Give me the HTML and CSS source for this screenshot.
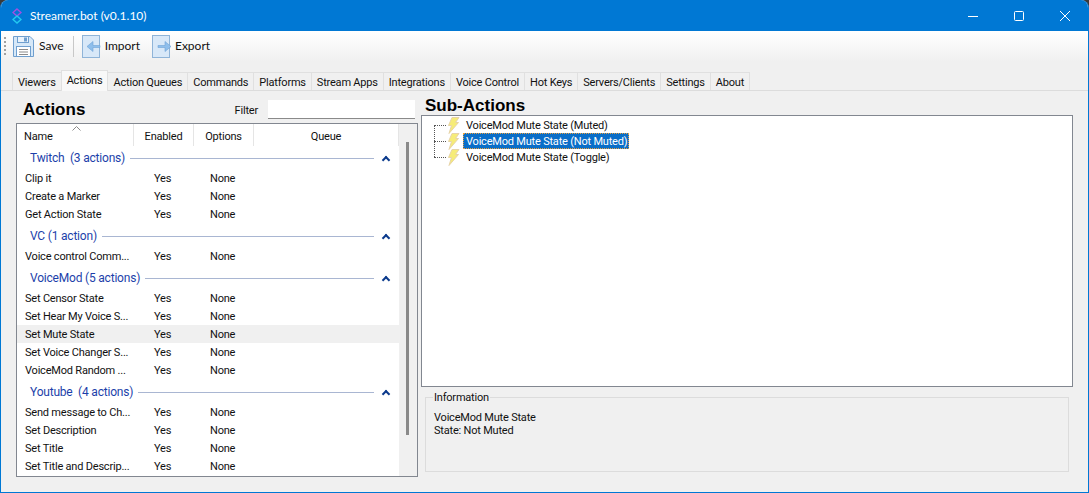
FILE: index.html
```html
<!DOCTYPE html>
<html>
<head>
<meta charset="utf-8">
<title>Streamer.bot</title>
<link rel="stylesheet" href="styles.css">
</head>
<body>
<div class="window">

  <!-- Title bar -->
  <div class="titlebar">
    <svg class="app-logo" width="10" height="16" viewBox="0 0 10 16" fill="none" stroke-width="1.5">
      <path d="M5 1 L9 4.5 L5 8 L1 4.5 Z" stroke="#a04fe0"/>
      <path d="M5 8 L9 11.5 L5 15 L1 11.5 Z" stroke="#22c8f0"/>
    </svg>
    <span class="title-text">Streamer.bot (v0.1.10)</span>
    <div class="win-buttons">
      <svg width="12" height="12" viewBox="0 0 12 12"><path d="M1 6.5 H11" stroke="#fff"/></svg>
      <svg width="12" height="12" viewBox="0 0 12 12"><rect x="1.5" y="1.5" width="9" height="9" rx="1" fill="none" stroke="#fff"/></svg>
      <svg width="12" height="12" viewBox="0 0 12 12"><path d="M1 1 L11 11 M11 1 L1 11" stroke="#fff"/></svg>
    </div>
  </div>

  <!-- Toolbar -->
  <div class="toolbar">
    <div class="gripper"></div>
    <div class="tool tool-save">
      <svg width="23" height="23" viewBox="0 0 23 23">
        <path d="M1.5 1.5 H18 L21.5 5 V21.5 H1.5 Z" fill="#d6e8f8" stroke="#6f9fcf"/>
        <rect x="5.5" y="1.5" width="11" height="6" fill="#eaf3fb" stroke="#6f9fcf"/>
        <rect x="12" y="2.5" width="3" height="4" fill="#6f9fcf"/>
        <rect x="4.5" y="11.5" width="14" height="10" fill="#fff" stroke="#6f9fcf"/>
        <path d="M7 14.5 H16 M7 17 H16 M7 19.5 H16" stroke="#8c8c8c"/>
      </svg>
      <span>Save</span>
    </div>
    <div class="tool-sep"></div>
    <div class="tool tool-import">
      <svg width="19" height="23" viewBox="0 0 19 23">
        <rect x="0.5" y="0.5" width="17" height="22" fill="#d8e8f8" stroke="#8fb4d8"/>
        <path d="M5 11.5 L11 6.5 V10.5 H18 V12.5 H11 V16.5 Z" fill="#8fbfec" stroke="#6fa3d6" stroke-width="0.6"/>
      </svg>
      <span>Import</span>
    </div>
    <div class="tool tool-export">
      <svg width="19" height="23" viewBox="0 0 19 23">
        <rect x="0.5" y="0.5" width="17" height="22" fill="#d8e8f8" stroke="#8fb4d8"/>
        <path d="M19 11.5 L13 6.5 V10.5 H6 V12.5 H13 V16.5 Z" fill="#8fbfec" stroke="#6fa3d6" stroke-width="0.6"/>
      </svg>
      <span>Export</span>
    </div>
  </div>

  <!-- Tabs -->
  <div class="tabs">
    <div class="tab">Viewers</div>
    <div class="tab tab-active">Actions</div>
    <div class="tab">Action Queues</div>
    <div class="tab">Commands</div>
    <div class="tab">Platforms</div>
    <div class="tab">Stream Apps</div>
    <div class="tab">Integrations</div>
    <div class="tab">Voice Control</div>
    <div class="tab">Hot Keys</div>
    <div class="tab">Servers/Clients</div>
    <div class="tab">Settings</div>
    <div class="tab">About</div>
  </div>

  <div class="tab-page">

    <!-- Actions column -->
    <div class="actions-pane">
      <div class="actions-head">
        <h1 class="pane-title">Actions</h1>
        <label class="filter-label">Filter</label>
        <div class="filter-input"></div>
      </div>
      <div class="listbox">
        <div class="list-main">
          <div class="list-header">
            <div class="col-name">Name</div>
            <div class="col-enabled">Enabled</div>
            <div class="col-options">Options</div>
            <div class="col-queue">Queue</div>
            <svg class="sort-caret" width="9" height="5" viewBox="0 0 9 5"><path d="M0.5 4.5 L4.5 0.5 L8.5 4.5" fill="none" stroke="#8a8a8a"/></svg>
          </div>

          <div class="group group-first"><span>Twitch&nbsp; (3 actions)</span><i></i><b class="chev"></b></div>
          <div class="row"><span>Clip it</span><span>Yes</span><span>None</span></div>
          <div class="row"><span>Create a Marker</span><span>Yes</span><span>None</span></div>
          <div class="row"><span>Get Action State</span><span>Yes</span><span>None</span></div>

          <div class="group"><span>VC (1 action)</span><i></i><b class="chev"></b></div>
          <div class="row"><span>Voice control Comm...</span><span>Yes</span><span>None</span></div>

          <div class="group"><span>VoiceMod (5 actions)</span><i></i><b class="chev"></b></div>
          <div class="row"><span>Set Censor State</span><span>Yes</span><span>None</span></div>
          <div class="row"><span>Set Hear My Voice S...</span><span>Yes</span><span>None</span></div>
          <div class="row row-current"><span>Set Mute State</span><span>Yes</span><span>None</span></div>
          <div class="row"><span>Set Voice Changer S...</span><span>Yes</span><span>None</span></div>
          <div class="row"><span>VoiceMod Random ...</span><span>Yes</span><span>None</span></div>

          <div class="group"><span>Youtube&nbsp; (4 actions)</span><i></i><b class="chev"></b></div>
          <div class="row"><span>Send message to Ch...</span><span>Yes</span><span>None</span></div>
          <div class="row"><span>Set Description</span><span>Yes</span><span>None</span></div>
          <div class="row"><span>Set Title</span><span>Yes</span><span>None</span></div>
          <div class="row"><span>Set Title and Descrip...</span><span>Yes</span><span>None</span></div>
        </div>
        <div class="scrollbar"><div class="thumb"></div></div>
      </div>
    </div>

    <!-- Sub-actions column -->
    <div class="sub-pane">
      <h2 class="pane-title sub-title">Sub-Actions</h2>
      <div class="treebox">
        <div class="tree-row">
          <svg class="bolt" width="13" height="17" viewBox="0 0 13 17"><path d="M5 0.5 H12 L8.5 5.5 H11.5 L2 16.5 L4.5 8.5 H1.5 Z" fill="#f6ec78" stroke="#e6d3a8"/></svg>
          <span class="tree-text">VoiceMod Mute State (Muted)</span>
        </div>
        <div class="tree-row">
          <svg class="bolt" width="13" height="17" viewBox="0 0 13 17"><path d="M5 0.5 H12 L8.5 5.5 H11.5 L2 16.5 L4.5 8.5 H1.5 Z" fill="#f6ec78" stroke="#e6d3a8"/></svg>
          <span class="tree-text tree-selected">VoiceMod Mute State (Not Muted)</span>
        </div>
        <div class="tree-row">
          <svg class="bolt" width="13" height="17" viewBox="0 0 13 17"><path d="M5 0.5 H12 L8.5 5.5 H11.5 L2 16.5 L4.5 8.5 H1.5 Z" fill="#f6ec78" stroke="#e6d3a8"/></svg>
          <span class="tree-text">VoiceMod Mute State (Toggle)</span>
        </div>
      </div>
      <fieldset class="info">
        <legend>Information</legend>
        <div>VoiceMod Mute State</div>
        <div>State: Not Muted</div>
      </fieldset>
    </div>

  </div>
</div>
</body>
</html>
```

FILE: styles.css
```css
* {
  box-sizing: border-box;
}

html, body {
  margin: 0;
  height: 100%;
  background-color: #3a3a3a;
}

body {
  overflow: hidden;
  font-family: Roboto, Arial, sans-serif;
  font-size: 11px;
  letter-spacing: -0.2px;
  color: #111;
}

.window {
  display: flex;
  flex-direction: column;
  height: 493px;
  background-color: #f0f0f0;
  border: 1px solid #0078d4;
  border-top: none;
  border-radius: 8px 8px 0 0;
  overflow: hidden;
}

/* Title bar */
.titlebar {
  display: flex;
  align-items: center;
  height: 31px;
  flex: none;
  background-color: #0078d4;
  color: #fff;
  padding-left: 11px;
}

.app-logo {
  margin-right: 8px;
}

.title-text {
  font-family: Lato, Arial, sans-serif;
  font-size: 12px;
  letter-spacing: 0;
}

.win-buttons {
  margin-left: auto;
  display: flex;
  gap: 34px;
  padding-right: 17px;
}

/* Toolbar */
.toolbar {
  display: flex;
  align-items: center;
  height: 30px;
  flex: none;
  background: linear-gradient(#ffffff, #f0f0f0);
  padding-left: 3px;
}

.gripper {
  width: 2px;
  height: 18px;
  margin-right: 6px;
  border-left: 2px dotted #a0a0a0;
}

.tool {
  display: flex;
  align-items: center;
  gap: 4px;
  font-family: Lato, Arial, sans-serif;
  font-size: 12px;
  letter-spacing: 0;
}

.tool span {
  padding-bottom: 2px;
}

.tool-sep {
  width: 1px;
  height: 21px;
  background-color: #c8c8c8;
  margin: 0 8px 0 9px;
}

.tool-export {
  margin-left: 12px;
}

/* Tabs */
.tabs {
  display: flex;
  align-items: flex-end;
  height: 30px;
  flex: none;
  padding-left: 11px;
  border-bottom: 1px solid #dcdcdc;
}

.tab {
  height: 18px;
  line-height: 19px;
  padding: 0 5px;
  background-color: #f0f0f0;
  border: 1px solid #e0e0e0;
  border-bottom: none;
  margin-right: -1px;
  white-space: nowrap;
}

.tab-active {
  height: 21px;
  line-height: 19px;
  background-color: #f8f8f8;
  position: relative;
  margin-bottom: -1px;
  z-index: 1;
}

/* Page under the tabs */
.tab-page {
  flex: 1;
  display: flex;
  gap: 3px;
  padding: 0 15px 15px 15px;
  min-height: 0;
}

.actions-pane {
  width: 402px;
  flex: none;
  display: flex;
  flex-direction: column;
}

.actions-head {
  display: flex;
  align-items: center;
  height: 32px;
  flex: none;
  padding: 4px 0 0 7px;
}

.pane-title {
  margin: 0;
  padding-top: 2px;
  font-family: "Liberation Sans", Arial, sans-serif;
  font-size: 17px;
  font-weight: bold;
  letter-spacing: 0;
  color: #000;
}

.filter-label {
  margin-left: auto;
  margin-right: 10px;
  padding-top: 2px;
}

.filter-input {
  width: 147px;
  height: 19px;
  background-color: #fff;
  border-bottom: 1px solid #8a8a8a;
  margin-right: 3px;
}

/* Action list */
.listbox {
  flex: 1;
  display: flex;
  min-height: 0;
  background-color: #fff;
  border: 1px solid #828790;
}

.list-main {
  flex: 1;
  overflow: hidden;
}

.list-header {
  position: relative;
  display: flex;
  height: 22px;
  line-height: 26px;
}

.list-header > div {
  border-right: 1px solid #e5e5e5;
  text-align: center;
}

.col-name {
  width: 117px;
  padding-left: 7px;
  text-align: left !important;
}

.col-enabled, .col-options {
  width: 60px;
}

.col-queue {
  flex: 1;
}

.sort-caret {
  position: absolute;
  left: 55px;
  top: 2px;
}

.group {
  display: flex;
  align-items: center;
  height: 24px;
  padding: 4px 0 0 13px;
  font-size: 12px;
  color: #1c3faa;
  margin-top: -1px;
}

.group-first {
  height: 22px;
  margin-top: 0;
  padding-top: 2px;
}

.group i {
  flex: 1;
  height: 1px;
  background-color: #a9b6d2;
  margin-left: 5px;
}

.chev {
  width: 6px;
  height: 6px;
  margin: 3px 10px 0 9px;
  border-left: 2px solid #0b3a8c;
  border-top: 2px solid #0b3a8c;
  transform: rotate(45deg);
}

.row {
  display: grid;
  grid-template-columns: 129px 56px 1fr;
  height: 18px;
  line-height: 20px;
  padding-left: 8px;
  white-space: nowrap;
}

.group + .row {
  margin-top: 1px;
}

.row-current {
  background-color: #f0f0f0;
}

.scrollbar {
  width: 18px;
  flex: none;
  background-color: #f0f0f0;
  padding: 18px 0 0 7px;
}

.thumb {
  width: 3px;
  height: 293px;
  background-color: #8a8a8a;
}

/* Sub actions */
.sub-pane {
  flex: 1;
  display: flex;
  flex-direction: column;
  min-width: 0;
}

.sub-title {
  height: 24px;
  padding: 0 0 0 4px;
  line-height: 29px;
  flex: none;
}

.treebox {
  position: relative;
  height: 272px;
  flex: none;
  background-color: #fff;
  border: 1px solid #828790;
  padding-top: 1px;
}

.treebox::before {
  content: "";
  position: absolute;
  left: 12px;
  top: 9px;
  height: 32px;
  border-left: 1px dotted #555;
}

.tree-row {
  position: relative;
  display: flex;
  align-items: center;
  height: 16px;
  padding-left: 25px;
}

.tree-row::before {
  content: "";
  position: absolute;
  left: 12px;
  top: 8px;
  width: 12px;
  border-top: 1px dotted #555;
}

.bolt {
  flex: none;
  margin-right: 3px;
}

.tree-text {
  height: 16px;
  padding: 1px 1px 0 2px;
  line-height: 14px;
  white-space: nowrap;
  border: 1px solid transparent;
}

.tree-selected {
  background-color: #0a6ec8;
  color: #fff;
  border: 1px dotted #e8a040;
}

.info {
  margin: 4px 4px 0 4px;
  padding: 7px 8px 0 8px;
  height: 81px;
  flex: none;
  border: 1px solid #dcdcdc;
  line-height: 13px;
}

.info legend {
  padding: 0 1px;
  margin-left: -1px;
  line-height: 13px;
}
```
